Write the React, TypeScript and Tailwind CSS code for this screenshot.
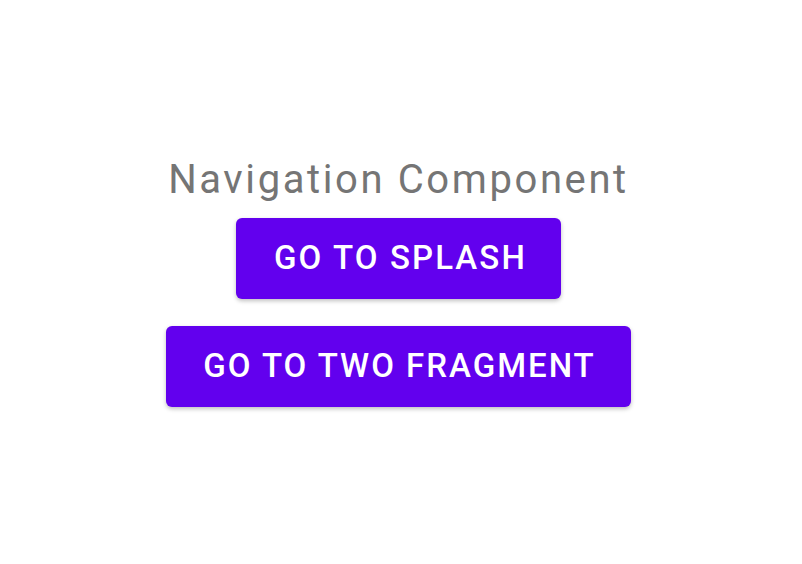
export default function App() {
  return (
    <div className="h-[564px] w-full bg-white flex flex-col items-center justify-center pr-[5px] font-['Roboto',sans-serif]">
      <h1 className="text-[40px] leading-[48px] tracking-[2.6px] text-[#757575] font-normal mt-[-2px]">Navigation Component</h1>
      <button className="mt-[14px] h-[81px] pl-[38px] pr-[34px] rounded-[6px] bg-[#6200ee] text-white text-[33px] leading-[40px] font-medium tracking-[2.1px] shadow-[0_2px_4px_rgba(0,0,0,0.25)]">
        GO TO SPLASH
      </button>
      <button className="mt-[27px] h-[81px] pl-[37px] pr-[35px] rounded-[6px] bg-[#6200ee] text-white text-[33px] leading-[40px] font-medium tracking-[2px] shadow-[0_2px_4px_rgba(0,0,0,0.25)]">
        GO TO TWO FRAGMENT
      </button>
    </div>
  );
}
